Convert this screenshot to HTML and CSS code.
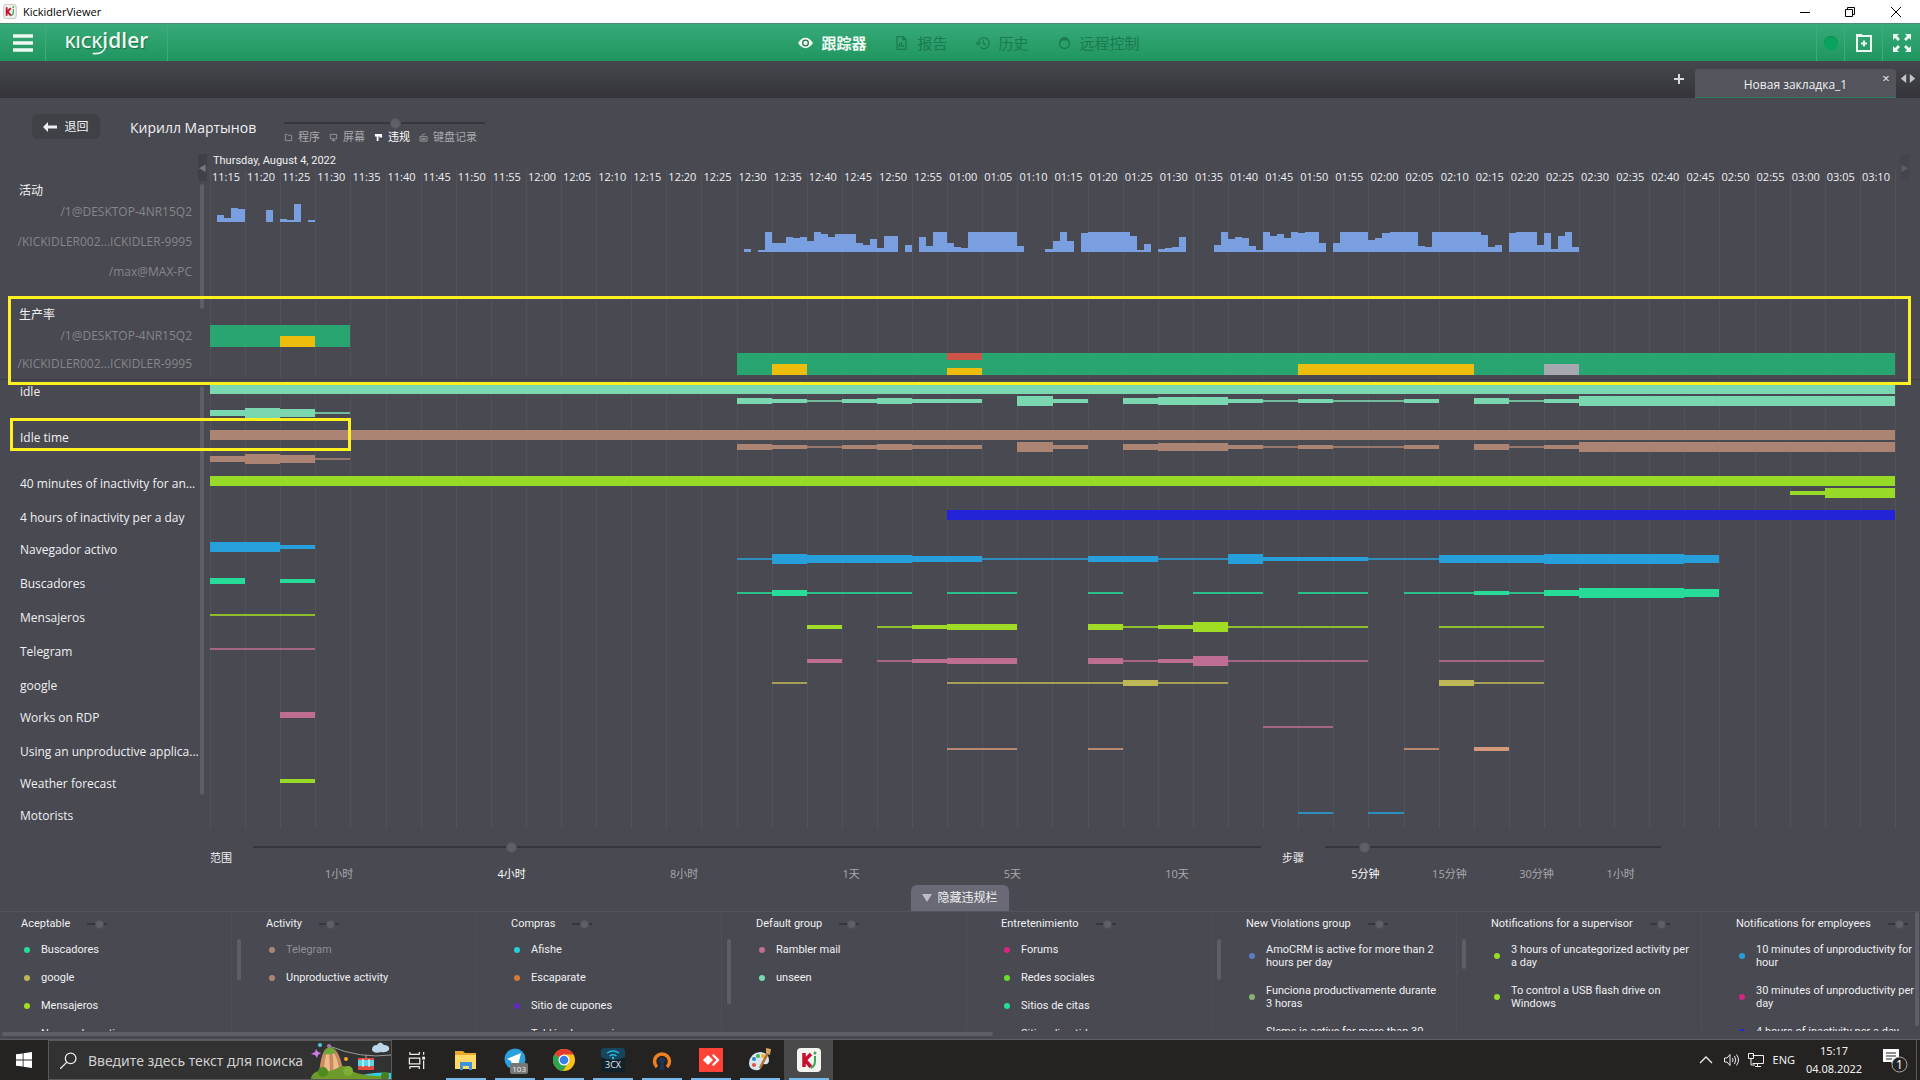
FILE: index.html
```html
<!DOCTYPE html>
<html lang="zh-CN">
<head>
  <meta charset="UTF-8">
  <meta name="viewport" content="width=device-width, initial-scale=1.0">
  <title>KickidlerViewer</title>
  <link rel="stylesheet" href="styles.css">
</head>
<body>
  <!-- Window title -->
  <div class="titlebar">
    <svg class="app-icon" viewBox="0 0 16 18"><rect x=".5" y=".5" width="15" height="17" rx="3" fill="#f1f1ee" stroke="#b9b9b4"/><path d="M4 4v10M9 5L5 9l4 5" stroke="#c8102e" stroke-width="2.2" fill="none"/><path d="M12 6v4q0 3-3 4" stroke="#3aa655" stroke-width="1.5" fill="none"/><circle cx="12" cy="3.6" r="1.1" fill="#3aa655"/></svg>
    <span class="window-name">KickidlerViewer</span>
    <div class="window-buttons">
      <button aria-label="Minimize"><svg viewBox="0 0 12 12"><path d="M1 6.5h10" stroke="#000"/></svg></button>
      <button aria-label="Restore"><svg viewBox="0 0 12 12"><path d="M1.500 3.500h7v7h-7zM3.500 3.500v-2h7v7h-2" stroke="#000" fill="none"/></svg></button>
      <button aria-label="Close"><svg viewBox="0 0 12 12"><path d="M1 1l10 10M11 1L1 11" stroke="#000"/></svg></button>
    </div>
  </div>

  <!-- Green header -->
  <header class="topbar">
    <div class="topbar-left">
      <button class="menu-button" aria-label="Menu"><svg viewBox="0 0 20 18"><path d="M0 2h20M0 9h20M0 16h20" stroke="#eef7f2" stroke-width="3.500"/></svg></button>
      <a href="#" class="logo"><span class="logo-small">KICK</span>idler<svg class="logo-tail" viewBox="0 0 20 10"><path d="M1 8q12 2 16-8" stroke="#eef7f2" stroke-width="2" fill="none"/></svg></a>
    </div>
    <nav class="main-nav">
      <a href="#" class="active"><svg viewBox="0 0 16 14"><path d="M0 7q3.500-5.500 8-5.500T16 7q-3.500 5.500-8 5.500T0 7z" fill="#f0faf5"/><circle cx="8" cy="7" r="3" fill="none" stroke="#26734f" stroke-width="1.400"/></svg>跟踪器</a>
      <a href="#"><svg viewBox="0 0 14 14"><path d="M2.500 .7h6l3 3v9.600h-9zM8.500 .7v3h3M5 7v4M7 6v5M9 9v2" fill="none" stroke="#1c7a50" stroke-width="1.300"/></svg>报告</a>
      <a href="#"><svg viewBox="0 0 16 14"><path d="M2.500 7a5.800 5.800 0 1 1 2 4.600M0 6l2.500 3L5 6M8 3.500V7l2.500 2.500" fill="none" stroke="#1c7a50" stroke-width="1.300"/></svg>历史</a>
      <a href="#"><svg viewBox="0 0 14 14"><circle cx="7" cy="7.500" r="5" fill="none" stroke="#1c7a50" stroke-width="1.300"/><path d="M2 7Q2 1 7 1t5 6L9.500 4.500h-5z" fill="#1c7a50"/></svg>远程控制</a>
    </nav>
    <div class="topbar-right">
      <span class="status"><i></i></span>
      <button aria-label="Add tab"><svg viewBox="0 0 20 20"><path d="M3 18V3h14v15zM2 2h6" fill="none" stroke="#eef7f2" stroke-width="2"/><path d="M10 7.500v6M7 10.500h6" stroke="#eef7f2" stroke-width="2"/></svg></button>
      <button aria-label="Full screen"><svg viewBox="0 0 20 20"><path d="M1 7V1h6L5 3l3 3-2 2-3-3zM19 7V1h-6l2 2-3 3 2 2 3-3zM1 13v6h6l-2-2 3-3-2-2-3 3zM19 13v6h-6l2-2-3-3 2-2 3 3z" fill="#eef7f2"/></svg></button>
    </div>
  </header>

  <div class="tabs">
    <button class="tab-add" aria-label="New tab"><svg viewBox="0 0 12 12"><path d="M6 1v10M1 6h10" stroke="#d8d8dc" stroke-width="2"/></svg></button>
    <div class="tab"><span>Новая закладка_1</span><button aria-label="Close tab">×</button></div>
    <button class="tab-scroll" aria-label="Scroll tabs"><svg viewBox="0 0 16 10"><path d="M6 0v10L0 5zM10 0v10l6-5z" fill="#c4c4c8"/></svg></button>
  </div>

  <main>
    <div class="person-bar">
      <button class="back"><svg viewBox="0 0 14 10"><path d="M0 5l5-5v3.500h9v3H5V10z" fill="#eee"/></svg>退回</button>
      <h1>Кирилл Мартынов</h1>
      <div class="view-mode">
        <input type="range" class="slider" aria-label="View" value="56">
        <div class="modes">
          <span><svg viewBox="0 0 10 10"><path d="M1.500 8.500v-7h2l1 1h4v6z" fill="none" stroke="#999"/></svg>程序</span>
          <span><svg viewBox="0 0 10 10"><path d="M1.500 1.500h7v5h-7zM5 6.500v2M3 8.500h4" fill="none" stroke="#999"/></svg>屏幕</span>
          <span class="active"><svg viewBox="0 0 10 10"><path d="M1 1h8v4H6V3.500H5V9H3V4H1z" fill="#fff"/></svg>违规</span>
          <span><svg viewBox="0 0 10 10"><path d="M1 9V4h8v5zM3 4q0-3 4-3" fill="none" stroke="#999"/><path d="M2.500 6h5M2.500 7.500h5" stroke="#999"/></svg>键盘记录</span>
        </div>
      </div>
    </div>

    <section class="top-chart">
      <button class="time-prev" aria-label="Earlier">◀</button>
      <button class="time-next" aria-label="Later">▶</button>
      <i class="v-thumb"></i>
      <div class="row date-row"><span></span><div>Thursday, August 4, 2022</div></div>
      <div class="row axis-row"><span></span><div class="track axis" id="axis"></div></div>
      <div class="row title-row"><span>活动</span><div class="track"></div></div>
      <div class="row host-row"><span>/1@DESKTOP-4NR15Q2</span><div class="track minutes" id="activity-1"></div></div>
      <div class="row host-row"><span>/KICKIDLER002...ICKIDLER-9995</span><div class="track minutes" id="activity-2"></div></div>
      <div class="row host-row"><span>/max@MAX-PC</span><div class="track"></div></div>
      <div class="productivity">
        <div class="row title-row"><span>生产率</span><div class="track"></div></div>
        <div class="row host-row"><span>/1@DESKTOP-4NR15Q2</span><div class="track blocks" id="productivity-1"></div></div>
        <div class="row host-row"><span>/KICKIDLER002...ICKIDLER-9995</span><div class="track blocks" id="productivity-2"></div></div>
        <i class="highlight"></i>
      </div>
    </section>

    <section class="violations">
      <i class="v-thumb"></i>
      <div id="violations"></div>
    </section>

    <div class="scale">
      <label for="range">范围</label>
      <div class="scale-range">
        <input type="range" class="slider" id="range" max="1000" value="254">
        <div class="ticks"><span>1小时</span><span class="active">4小时</span><span>8小时</span><span>1天</span><span>5天</span><span>10天</span></div>
      </div>
      <label for="step">步骤</label>
      <div class="scale-step">
        <input type="range" class="slider" id="step" max="1000" value="105">
        <div class="ticks"><span class="active">5分钟</span><span>15分钟</span><span>30分钟</span><span>1小时</span></div>
      </div>
    </div>

    <button class="toggle-legend"><svg viewBox="0 0 10 8"><path d="M0 0h10L5 8z" fill="#bdbdc2"/></svg>隐藏违规栏</button>

    <section class="legend">
      <div class="groups" id="groups"></div>
      <i class="h-thumb"></i>
      <i class="v-thumb"></i>
    </section>
  </main>

  <!-- Taskbar -->
  <footer class="taskbar">
    <button class="start" aria-label="Start"><svg viewBox="0 0 16 16"><path d="M0 2.300L6.700 1.400v6.200H0zM7.500 1.300L16 0v7.600H7.500zM0 8.400h6.700v6.200L0 13.700zM7.500 8.400H16V16l-8.500-1.200z" fill="#fff"/></svg></button>
    <div class="search">
      <svg class="search-icon" viewBox="0 0 16 16"><circle cx="10" cy="6" r="5" fill="none" stroke="#eee" stroke-width="1.200"/><path d="M6.500 9.500L0 16" stroke="#eee" stroke-width="1.200"/></svg>
      <input type="text" aria-label="Поиск" placeholder="Введите здесь текст для поиска">
      <svg class="search-art" viewBox="0 0 80 38">
        <path d="M18 5Q50 18 80 14" fill="none" stroke="#9a9a9a"/>
        <path d="M8 34Q10 8 17 7h4q8 2 12 27z" fill="#c98a5e"/><path d="M13 34q0-18 4-25 2 6 2 25zM22 34q1-16-1-24 6 6 8 24z" fill="#edbb8e"/>
        <path d="M12 13q2-6 7-7 5 1 6 6-6 2-13 1z" fill="#6fa63a"/>
        <path d="M40 38q20-8 40-6v6z" fill="#35cfe0"/>
        <path d="M0 38q1-8 10-8 12 1 18-4 6-3 11 2 4 6 30 7l5 3z" fill="#6d9a2a"/><circle cx="12" cy="31" r="5" fill="#4f8a1f"/><circle cx="37" cy="30" r="5" fill="#7fae35"/><circle cx="74" cy="35" r="4" fill="#4b7d1d"/>
        <path d="M55 14v5" stroke="#aaa"/><rect x="47" y="18" width="16" height="11" rx="1" fill="#59d4ea"/><path d="M47 17h16v2H47zM47 25h16v4H47z" fill="#e34b3f"/><path d="M52 18v8M58 18v8" stroke="#fff"/>
        <path d="M61 9q0-5 5-5 3-5 7 0 6 0 5 5-3 3-8 2-7 2-9-2z" fill="#bcd6ea"/>
        <path d="M5 8l2 3 3 1-3 2-1 3-2-3-4-1 4-2z" fill="#cf7bea"/><circle cx="9" cy="4" r="2" fill="#4ecbe0"/><circle cx="18" cy="5" r="2" fill="#a779a8"/><circle cx="35" cy="18" r="2" fill="#f5a81c"/>
      </svg>
    </div>
    <button class="app" aria-label="Task view"><svg viewBox="0 0 20 20"><path d="M3 3V1M13 3V1M2.500 3.500h11M2.500 7.500h11v6h-11zM2.500 16.500h11M3 17v2M13 17v2M17.500 1v3M17.500 10v9" fill="none" stroke="#eee" stroke-width="1.300"/><rect x="16" y="6" width="3" height="3" fill="#eee"/></svg></button>
    <button class="app running" aria-label="Explorer"><svg viewBox="0 0 24 24"><path d="M1 3h8l2 2h11v16H1z" fill="#e8a92c"/><path d="M1 7h21v14H1z" fill="#fcd968"/><path d="M6 22v-8h12v8h-3v-4H9v4z" fill="#3f93d6"/></svg></button>
    <button class="app running" aria-label="Telegram"><svg viewBox="0 0 24 24"><circle cx="12" cy="11" r="10.500" fill="#2aa1dc"/><path d="M4 11l14-6-3 13-4-3-2 2-1-4z" fill="#fff"/></svg><span class="badge">103</span></button>
    <button class="app running" aria-label="Chrome"><svg viewBox="0 0 24 24"><circle cx="12" cy="12" r="11" fill="#fbc116"/><path d="M12 12L2.500 6.500A11 11 0 0 1 21.500 6.500H12z" fill="#e33b2e"/><path d="M12 12L2.500 6.500A11 11 0 0 0 11 23l5.500-9z" fill="#2da44e"/><circle cx="12" cy="12" r="5.500" fill="#fff"/><circle cx="12" cy="12" r="4.300" fill="#3b7ded"/></svg></button>
    <button class="app running" aria-label="3CX"><svg viewBox="0 0 24 24"><rect width="24" height="24" rx="3" fill="#10222c"/><path d="M0 9V3q0-3 3-3h18q3 0 3 3v6q-12 6-24 0z" fill="#17465c"/><path d="M6 5q6-4 12 0M8.500 8q3.500-2.500 7 0" fill="none" stroke="#27b5e3" stroke-width="1.500"/><circle cx="12" cy="10" r="1.200" fill="#27b5e3"/><text x="12" y="20" text-anchor="middle" class="cx-text">3CX</text></svg></button>
    <button class="app running" aria-label="OpenVPN"><svg viewBox="0 0 24 24"><path d="M7 19A7.500 7.500 0 1 1 17 19" fill="none" stroke="#ee7f22" stroke-width="3.500"/><path d="M9.500 22l1-7a3 3 0 1 1 3 0l1 7z" fill="#1f3557"/></svg></button>
    <button class="app running" aria-label="AnyDesk"><svg viewBox="0 0 24 24"><path d="M0 0h24v24H0z" fill="#ff4238"/><path d="M9 7l5 5-5 5-5-5z" fill="#fff"/><path d="M13 7.500L14.500 6l6 6-6 6-1.500-1.500 4.500-4.500z" fill="#fff"/></svg></button>
    <button class="app running" aria-label="Paint"><svg viewBox="0 0 24 24"><path d="M1 15Q2 5 12 4q9 1 9 8 0 5-5 4-3 0-3 3-1 4-6 3-6-1-6-7z" fill="#d8e6f0"/><circle cx="6" cy="11" r="2" fill="#2a86d1"/><circle cx="10" cy="8" r="2" fill="#4cb14c"/><circle cx="15" cy="8" r="2" fill="#f0b022"/><circle cx="6" cy="17" r="2" fill="#e2513c"/><path d="M21 3l-9 17" stroke="#b5702c" stroke-width="2.500"/><path d="M18 0l5 1-1 6-4-2z" fill="#d8a35d"/></svg></button>
    <button class="app running current" aria-label="Kickidler"><svg viewBox="0 0 24 24"><rect width="24" height="24" rx="4" fill="#f3f3f0"/><path d="M7 5v14M14 6l-6 6 6 7" fill="none" stroke="#c8102e" stroke-width="3.500"/><path d="M18 8v5q0 5-4 7" fill="none" stroke="#3aa655" stroke-width="2"/><circle cx="18" cy="5" r="1.500" fill="#3aa655"/></svg></button>

    <div class="tray">
      <svg viewBox="0 0 16 16"><path d="M2 11l6-6 6 6" fill="none" stroke="#eee" stroke-width="1.300"/></svg>
      <svg viewBox="0 0 16 16"><path d="M1.500 6h2.500l3-3.500v11L4 10H1.500zM9.500 6q1 2 0 4M11.500 4q2.500 4 0 8M13.500 2.500q4 5.500 0 11" fill="none" stroke="#eee"/></svg>
      <svg viewBox="0 0 16 16"><path d="M4.500 3.500h11v8h-11M.5 1.500h5v5h-5zM3 7v6h4M9.500 12v2.500M7 14.500h6" fill="none" stroke="#eee"/></svg>
      <span>ENG</span>
      <time><span>15:17</span><span>04.08.2022</span></time>
      <button class="notify" aria-label="Notifications"><svg viewBox="0 0 26 26"><path d="M1 2h16v13h-4v4l-4-4H1z" fill="#fff"/><path d="M4 6h10M4 9h10M4 12h6" stroke="#242322" stroke-width="1.200"/><circle cx="17.500" cy="17.500" r="7.500" fill="#242322" stroke="#aaa"/><text x="17.500" y="22" text-anchor="middle" class="notify-count">1</text></svg></button>
    </div>
  </footer>

  <script src="script.js"></script>
</body>
</html>
```
FILE: styles.css
```css
* {
  box-sizing: border-box;
  margin: 0;
  padding: 0;
}

body {
  font-family: "Open Sans", "Noto Sans CJK SC", sans-serif;
  font-size: 11px;
  line-height: 16px;
  color: #f0f0f2;
  background-color: #484951;
  height: 100vh;
  display: flex;
  flex-direction: column;
  overflow: hidden;
}

button {
  background: none;
  border: none;
  color: inherit;
  font: inherit;
  display: flex;
  align-items: center;
  justify-content: center;
}

a {
  color: inherit;
  text-decoration: none;
}

svg {
  display: block;
  flex-shrink: 0;
}

/* Window title */
.titlebar {
  height: 23px;
  flex-shrink: 0;
  background-color: #fff;
  color: #000;
  display: flex;
  align-items: center;
  padding-left: 3px;
}

.app-icon {
  width: 14px;
  height: 15px;
  margin-right: 6px;
}

.window-name {
  flex: 1;
  font-size: 11px;
}

.window-buttons {
  display: flex;
}

.window-buttons button {
  width: 45px;
  height: 20px;
}

.window-buttons button:last-child {
  width: 48px;
}

.window-buttons svg {
  width: 12px;
  height: 12px;
}

/* Green header */
.topbar {
  height: 38px;
  flex-shrink: 0;
  display: grid;
  grid-template-columns: 1fr auto 1fr;
  background: linear-gradient(#38ab78, #1f955f);
  border-top: 1px solid #4b8a70;
}

.topbar-left,
.topbar-right,
.main-nav {
  display: flex;
  align-items: stretch;
}

.menu-button {
  width: 46px;
  border-right: 1px solid #42a97c;
}

.menu-button svg {
  width: 20px;
  height: 18px;
}

.logo {
  width: 122px;
  border-right: 1px solid #42a97c;
  font-size: 21px;
  font-weight: 600;
  line-height: 33px;
  text-align: center;
  color: #eef7f2;
  text-shadow: 1px 1px 1px #1b7048;
  position: relative;
}

.logo-small {
  font-size: 17px;
}

.logo-tail {
  position: absolute;
  left: 46px;
  bottom: 6px;
  width: 16px;
  height: 8px;
}

.main-nav {
  gap: 28px;
  padding-left: 18px;
}

.main-nav a {
  display: flex;
  align-items: center;
  gap: 8px;
  font-size: 15px;
  color: #1c7a50;
}

.main-nav svg {
  width: 15px;
  height: 14px;
}

.main-nav .active {
  color: #f0faf5;
  font-weight: bold;
}

.topbar-right {
  justify-content: flex-end;
}

.topbar-right > * {
  width: 38px;
  border-left: 1px solid #42a97c;
}

.topbar-right .status {
  width: 28px;
  display: flex;
  align-items: center;
  justify-content: center;
}

.status i {
  width: 14px;
  height: 14px;
  border-radius: 50%;
  background-color: #07a45e;
  border-top: 1px solid #168550;
}

.topbar-right svg {
  width: 20px;
  height: 20px;
}

/* Tabs */
.tabs {
  height: 37px;
  flex-shrink: 0;
  display: flex;
  align-items: flex-end;
  justify-content: flex-end;
  background: linear-gradient(#46474e, #34343a);
}

.tab-add {
  width: 32px;
  height: 37px;
  padding-bottom: 2px;
}

.tab-add svg {
  width: 12px;
  height: 12px;
}

.tab {
  width: 201px;
  height: 29px;
  display: flex;
  align-items: center;
  background-color: #53545c;
  border-bottom: 1px solid #2f7d5c;
  border-radius: 3px 3px 0 0;
  font-size: 12px;
}

.tab span {
  flex: 1;
  text-align: center;
  padding: 3px 0 0 20px;
}

.tab button {
  width: 20px;
  height: 18px;
  align-self: flex-start;
  font-size: 13px;
}

.tab-scroll {
  width: 24px;
  height: 37px;
  padding-bottom: 2px;
}

.tab-scroll svg {
  width: 16px;
  height: 9px;
}

/* Sliders */
.slider {
  appearance: none;
  display: block;
  width: 100%;
  height: 12px;
  background: linear-gradient(#36363d, #36363d) center / 100% 2px no-repeat;
}

.slider::-webkit-slider-thumb {
  appearance: none;
  width: 11px;
  height: 11px;
  border-radius: 50%;
  background-color: #5e5f68;
  border: 1px solid #515259;
}

/* Person bar */
main {
  flex: 1;
  min-height: 0;
  display: flex;
  flex-direction: column;
}

.person-bar {
  display: flex;
  align-items: flex-start;
  padding: 16px 32px 0;
  height: 56px;
  flex-shrink: 0;
}

.back {
  width: 68px;
  height: 25px;
  border-radius: 6px;
  background-color: #404147;
  gap: 7px;
  font-size: 12px;
}

.back svg {
  width: 14px;
  height: 10px;
}

.person-bar h1 {
  width: 154px;
  margin-left: 30px;
  font-size: 14px;
  font-weight: normal;
  line-height: 27px;
  white-space: nowrap;
}

.view-mode {
  width: 201px;
  padding-top: 3px;
}

.modes {
  display: flex;
  gap: 9px;
  color: #a9a9ae;
  font-size: 11px;
  white-space: nowrap;
}

.modes span {
  display: flex;
  align-items: center;
  gap: 5px;
}

.modes svg {
  width: 9px;
  height: 9px;
}

.modes .active,
.ticks .active {
  color: #fff;
}

/* Chart rows: name on the left, track on the right */
.top-chart,
.violations,
.productivity {
  position: relative;
}

.row {
  display: grid;
  grid-template-columns: 192px 1fr;
  column-gap: 18px;
  padding-right: 24px;
}

.track {
  background: repeating-linear-gradient(to right, #51525a 0, #51525a 1px, transparent 1px, transparent calc(100% / 48));
  border-right: 1px solid #51525a;
}

.date-row {
  height: 16px;
  font-family: Roboto, sans-serif;
  line-height: 14px;
}

.date-row div {
  padding-left: 3px;
}

.axis {
  display: grid;
  grid-template-columns: repeat(48, 1fr);
  height: 14px;
  line-height: 14px;
}

.axis span {
  padding-left: 2px;
}

.title-row {
  height: 13px;
  line-height: 13px;
  font-size: 12px;
}

.title-row > span {
  padding-left: 19px;
}

.host-row {
  height: 30px;
  line-height: 29px;
  color: #85868c;
  font-size: 12px;
}

.host-row > span {
  text-align: right;
  white-space: nowrap;
}

.minutes {
  display: grid;
  grid-template-columns: repeat(240, 1fr);
  align-items: end;
  padding: 5px 0;
}

.minutes i {
  background-color: #7a9fe0;
  grid-row: 1;
}

.productivity {
  border-bottom: 1px solid #3e3f46;
  padding-bottom: 1px;
}

.productivity .title-row {
  height: 35px;
  line-height: 56px;
}

.productivity .host-row {
  height: 28px;
  line-height: 28px;
}

.blocks,
.lane {
  display: grid;
  grid-template-columns: repeat(48, 1fr);
}

.blocks {
  padding: 3px 0;
}

.blocks i {
  grid-row: 1;
  align-self: end;
}

.blocks .good {
  background-color: #29a571;
}

.blocks .neutral {
  background-color: #ecbd0a;
}

.blocks .bad {
  background-color: #cc5548;
  align-self: start;
}

.blocks .unknown {
  background-color: #a5a8ae;
}

.highlight {
  position: absolute;
  z-index: 1;
  border: 3px solid #fdf01f;
}

.productivity .highlight {
  top: 9px;
  bottom: -6px;
  left: 8px;
  right: 9px;
}

.v-thumb {
  position: absolute;
  left: 200px;
  top: 30px;
  width: 4px;
  height: 125px;
  border-radius: 2px;
  background-color: #5d5e67;
}

.time-prev,
.time-next {
  position: absolute;
  top: 0;
  left: 198px;
  width: 9px;
  height: 27px;
  background-color: #404147;
  color: #77787f;
  font-size: 8px;
}

.time-next {
  left: auto;
  right: 11px;
  background-color: #45464d;
  color: #5b5c64;
}

/* Violations */
.violations {
  padding-top: 4px;
}

.violations .v-thumb {
  top: 6px;
  height: 409px;
}

.violation {
  position: relative;
  min-height: 32px;
}

.violation:last-child {
  min-height: 20px;
}

.violation .name {
  padding-left: 20px;
  font-size: 12px;
  white-space: nowrap;
}

.lanes {
  display: flex;
  flex-direction: column;
  gap: 2px;
  padding-bottom: 12px;
}

.violation:last-child .lanes {
  padding-bottom: 10px;
}

.lane {
  height: 10px;
  align-items: center;
}

.lane i {
  grid-row: 1;
}

.lane .thin {
  opacity: 0.8;
}

.violation .highlight {
  top: -12px;
  left: 10px;
  width: calc(200px + (100% - 234px) / 12);
  height: 33px;
}

/* Scale sliders */
.scale {
  display: flex;
  padding: 13px 259px 0 210px;
  height: 57px;
  flex-shrink: 0;
}

.scale label {
  width: 43px;
  padding-top: 9px;
  white-space: nowrap;
}

.scale-range {
  flex: 3;
  margin-right: 21px;
}

.scale-step {
  flex: 1;
}

.ticks {
  display: flex;
  justify-content: space-around;
  padding-top: 13px;
  color: #a9a9ae;
}

.toggle-legend {
  align-self: center;
  width: 98px;
  height: 26px;
  flex-shrink: 0;
  gap: 5px;
  border-radius: 6px 6px 0 0;
  background-color: #696a75;
  font-size: 12px;
}

.toggle-legend svg {
  width: 10px;
  height: 8px;
}

/* Legend */
.legend {
  flex: 1;
  min-height: 0;
  position: relative;
  border-top: 1px solid #53545b;
  border-bottom: 1px solid #5d5e66;
  padding-bottom: 8px;
  overflow: hidden;
  font-family: Roboto, sans-serif;
}

.legend > .v-thumb {
  left: auto;
  right: 1px;
  top: 0;
  height: 114px;
}

.h-thumb {
  position: absolute;
  left: 2px;
  bottom: 3px;
  width: 991px;
  height: 4px;
  border-radius: 2px;
  background-color: #5d5e67;
}

.groups {
  display: flex;
  height: 100%;
  overflow: hidden;
}

.group {
  position: relative;
  flex: 0 0 245px;
  min-width: 0;
  padding: 4px 20px 0 21px;
  background: linear-gradient(#4e4f57, #4e4f57) 231px 0 / 1px 100% no-repeat;
}

.group h2 {
  display: flex;
  align-items: center;
  gap: 17px;
  font-size: 11px;
  font-weight: normal;
  white-space: nowrap;
}

.group .slider {
  width: 20px;
}

.group .slider::-webkit-slider-thumb {
  width: 9px;
  height: 9px;
}

.group .v-thumb {
  left: 237px;
  top: 27px;
}

.group ul {
  list-style: none;
  display: flex;
  flex-direction: column;
  gap: 15px;
  margin-top: 11px;
}

.group li {
  display: flex;
  align-items: center;
  gap: 11px;
  line-height: 13px;
  white-space: pre;
}

.group li.off {
  color: #8f9096;
}

.group li i {
  width: 6px;
  height: 6px;
  margin-left: 3px;
  border-radius: 50%;
  flex-shrink: 0;
}

/* Taskbar */
.taskbar {
  height: 40px;
  flex-shrink: 0;
  display: flex;
  background-color: #242322;
}

.start {
  width: 48px;
}

.start svg {
  width: 16px;
  height: 16px;
}

.search {
  width: 344px;
  display: flex;
  align-items: center;
  background-color: #333232;
  border: 1px solid #5a5959;
  padding-left: 11px;
}

.search-icon {
  width: 17px;
  height: 17px;
  margin-right: 11px;
}

.search input {
  flex: 1;
  min-width: 0;
  border: none;
  background: none;
  font-family: "Noto Sans", sans-serif;
  font-size: 14px;
}

.search input::placeholder {
  color: #cfcfcf;
}

.search-art {
  width: 80px;
  height: 38px;
}

.app {
  position: relative;
  width: 49px;
}

.app svg {
  width: 24px;
  height: 24px;
}

.app:nth-of-type(2) svg {
  width: 19px;
  height: 19px;
}

.running {
  background: linear-gradient(#76b9ed, #76b9ed) center bottom / 40px 2px no-repeat;
}

.current {
  background-color: #4b4a4a;
}

.badge {
  position: absolute;
  right: 11px;
  bottom: 6px;
  padding: 0 2px;
  border-radius: 2px;
  background-color: #777;
  font-size: 8px;
  line-height: 11px;
}

.cx-text {
  font-size: 9px;
  fill: #e8eef1;
}

.tray {
  flex: 1;
  display: flex;
  align-items: center;
  justify-content: flex-end;
  gap: 9px;
  font-family: "Noto Sans", sans-serif;
  font-size: 11px;
}

.tray svg {
  width: 16px;
  height: 16px;
}

.tray time {
  display: flex;
  flex-direction: column;
  align-items: center;
  width: 60px;
  line-height: 18px;
}

.tray .notify {
  width: 44px;
  height: 40px;
  margin-right: 3px;
  border-right: 1px solid #5a5959;
}

.tray .notify svg {
  width: 26px;
  height: 26px;
}

.notify-count {
  font-size: 12px;
  fill: #fff;
}
```
FILE: script.js
```js
const COLUMNS = 48;

// [first minute, heights...] counted from 11:15
const activity = {
  'activity-1': [[1, 7, 4, 14, 13], [8, 12], [10, 3, 2, 18], [14, 2]],
  'activity-2': [
    [76, 3], [78, 2, 20, 9, 9, 15, 14, 15, 11, 20, 18, 15, 18, 18, 18, 9, 7, 13, 4, 16, 16],
    [99, 7], [101, 15, 6, 20, 20, 9, 5, 4, 20, 20, 20, 20, 20, 20, 20, 6],
    [119, 3, 11, 20, 11], [124, 19, 20, 20, 20, 20, 20, 20, 16, 2, 8], [135, 3, 4, 5, 15],
    [143, 7, 20, 13, 15, 14, 6, 2, 20, 16, 18, 14, 20, 19, 20, 20, 9],
    [160, 9, 20, 20, 20, 20, 12, 14, 19, 20, 20, 20, 20, 6, 5, 20, 20, 20, 20, 20, 20, 20, 17, 5, 7],
    [185, 19, 20, 20, 20, 7, 19, 3, 16, 20, 5]
  ]
};

// [type, first column, columns, height]
const productivity = {
  'productivity-1': [['good', 0, 4, 22], ['neutral', 2, 1, 11]],
  'productivity-2': [
    ['good', 15, 33, 22], ['neutral', 16, 1, 11], ['bad', 21, 1, 7], ['neutral', 21, 1, 7],
    ['neutral', 31, 5, 11], ['unknown', 38, 1, 11]
  ]
};

// Lanes hold [first column, columns, height]
const inactive = [
  [[0, 48, 10]],
  [[15, 1, 6], [16, 1, 4], [17, 1, 2], [18, 1, 4], [19, 1, 6], [20, 2, 4], [23, 1, 10], [24, 1, 4],
    [26, 1, 6], [27, 2, 8], [29, 1, 4], [30, 1, 2], [31, 1, 4], [32, 2, 2], [34, 1, 4], [36, 1, 6],
    [37, 1, 2], [38, 1, 4], [39, 9, 10]],
  [[0, 1, 6], [1, 1, 10], [2, 1, 8], [3, 1, 2]]
];
const messengers = [
  [[0, 3, 2]],
  [[17, 1, 4], [19, 1, 2], [20, 1, 4], [21, 2, 6], [25, 1, 6], [26, 1, 2], [27, 1, 4], [28, 1, 10],
    [29, 4, 2], [35, 3, 2]]
];
const violations = [
  { name: 'idle', color: '#7ad7b0', lanes: inactive },
  { name: 'Idle time', color: '#ab8473', lanes: inactive, highlight: true },
  { name: '40 minutes of inactivity for an...', color: '#97db28', lanes: [[[0, 48, 10]], [[45, 1, 4], [46, 2, 10]]] },
  { name: '4 hours of inactivity per a day', color: '#2324d7', lanes: [[[21, 27, 10]]] },
  {
    name: 'Navegador activo', color: '#269fda', lanes: [
      [[0, 2, 10], [2, 1, 4]],
      [[15, 1, 2], [16, 1, 10], [17, 3, 8], [20, 2, 6], [22, 3, 2], [25, 2, 6], [27, 2, 2], [29, 1, 10],
        [30, 3, 4], [33, 2, 2], [35, 3, 8], [38, 4, 10], [42, 1, 8]]
    ]
  },
  {
    name: 'Buscadores', color: '#26dc98', lanes: [
      [[0, 1, 6], [2, 1, 4]],
      [[15, 1, 2], [16, 1, 6], [17, 3, 2], [21, 2, 2], [25, 1, 2], [28, 2, 2], [31, 2, 2], [34, 2, 2],
        [36, 1, 4], [37, 1, 2], [38, 1, 6], [39, 3, 10], [42, 1, 8]]
    ]
  },
  { name: 'Mensajeros', color: '#a0dc26', lanes: messengers },
  { name: 'Telegram', color: '#bd6e92', lanes: messengers },
  { name: 'google', color: '#bdb758', lanes: [[[16, 1, 2], [21, 5, 2], [26, 1, 6], [27, 2, 2], [35, 1, 6], [36, 2, 2]]] },
  { name: 'Works on RDP', color: '#bd6e92', lanes: [[[2, 1, 6]], [[30, 2, 2]]] },
  { name: 'Using an unproductive applica...', color: '#d3977a', lanes: [[[21, 2, 2], [25, 1, 2], [34, 1, 2], [36, 1, 4]]] },
  { name: 'Weather forecast', color: '#97db28', lanes: [[[2, 1, 4]]] },
  { name: 'Motorists', color: '#269fda', lanes: [[[31, 1, 2], [33, 1, 2]]] }
];

const groups = [
  { name: 'Aceptable', thumb: 41, items: [['#26dc98', 'Buscadores'], ['#bdb758', 'google'], ['#a0dc26', 'Mensajeros'], ['#269fda', 'Navegador activo']] },
  { name: 'Activity', items: [['#ab8473', 'Telegram', 'off'], ['#ab8473', 'Unproductive activity']] },
  { name: 'Compras', thumb: 65, items: [['#26cfd7', 'Afishe'], ['#d67a35', 'Escaparate'], ['#5f2bc4', 'Sitio de cupones'], ['#484951', 'Tablón de anuncios']] },
  { name: 'Default group', items: [['#bd6e92', 'Rambler mail'], ['#7ad7b0', 'unseen']] },
  { name: 'Entretenimiento', thumb: 41, items: [['#d7267f', 'Forums'], ['#6fdc26', 'Redes sociales'], ['#26dc98', 'Sitios de citas'], ['#269fda', 'Sitios divertidos']] },
  { name: 'New Violations group', thumb: 30, items: [['#5a7cc4', 'AmoCRM is active for more than 2\nhours per day'], ['#8bb06e', 'Funciona productivamente durante\n3 horas'], ['#484951', 'Slems is active for more than 30\nminutes']] },
  { name: 'Notifications for a supervisor', items: [['#97db28', '3 hours of uncategorized activity per\na day'], ['#97db28', 'To control a USB flash drive on\nWindows']] },
  { name: 'Notifications for employees', items: [['#269fda', '10 minutes of unproductivity for\nhour'], ['#d7267f', '30 minutes of unproductivity per\nday'], ['#2324d7', '4 hours of inactivity per a day']] }
];

function bar(start, span, height, className) {
  const cls = className ? ` class="${className}"` : '';
  return `<i${cls} style="grid-column:${start + 1} / span ${span};height:${height}px"></i>`;
}

// Time axis, one label every 5 minutes on a 12-hour clock
let axis = '';
for (let i = 0; i < COLUMNS; i++) {
  const minutes = 11 * 60 + 15 + i * 5;
  const hour = Math.floor(minutes / 60) % 12 || 12;
  axis += `<span>${String(hour).padStart(2, '0')}:${String(minutes % 60).padStart(2, '0')}</span>`;
}
document.getElementById('axis').innerHTML = axis;

for (const id in activity) {
  document.getElementById(id).innerHTML = activity[id]
    .map(([start, ...heights]) => heights.map((h, i) => bar(start + i, 1, h)).join(''))
    .join('');
}

for (const id in productivity) {
  document.getElementById(id).innerHTML = productivity[id]
    .map(([type, start, span, height]) => bar(start, span, height, type))
    .join('');
}

document.getElementById('violations').innerHTML = violations.map(v => {
  const lanes = v.lanes.map(lane => {
    const bars = lane.map(([start, span, height]) =>
      `<i class="${height === 2 ? 'thin' : ''}" style="grid-column:${start + 1} / span ${span};height:${height}px;background:${v.color}"></i>`);
    return `<div class="lane">${bars.join('')}</div>`;
  });
  return `<div class="row violation"><span class="name">${v.name}</span>
    <div class="track lanes">${lanes.join('')}</div>${v.highlight ? '<i class="highlight"></i>' : ''}</div>`;
}).join('');

document.getElementById('groups').innerHTML = groups.map(g => `
  <div class="group">
    <h2>${g.name}<input type="range" class="slider" value="68" aria-label="${g.name}"></h2>
    ${g.thumb ? `<i class="v-thumb" style="height:${g.thumb}px"></i>` : ''}
    <ul>${g.items.map(([color, text, state]) =>
      `<li class="${state || ''}"><i style="background:${color}"></i><span>${text}</span></li>`).join('')}</ul>
  </div>`).join('');
```
